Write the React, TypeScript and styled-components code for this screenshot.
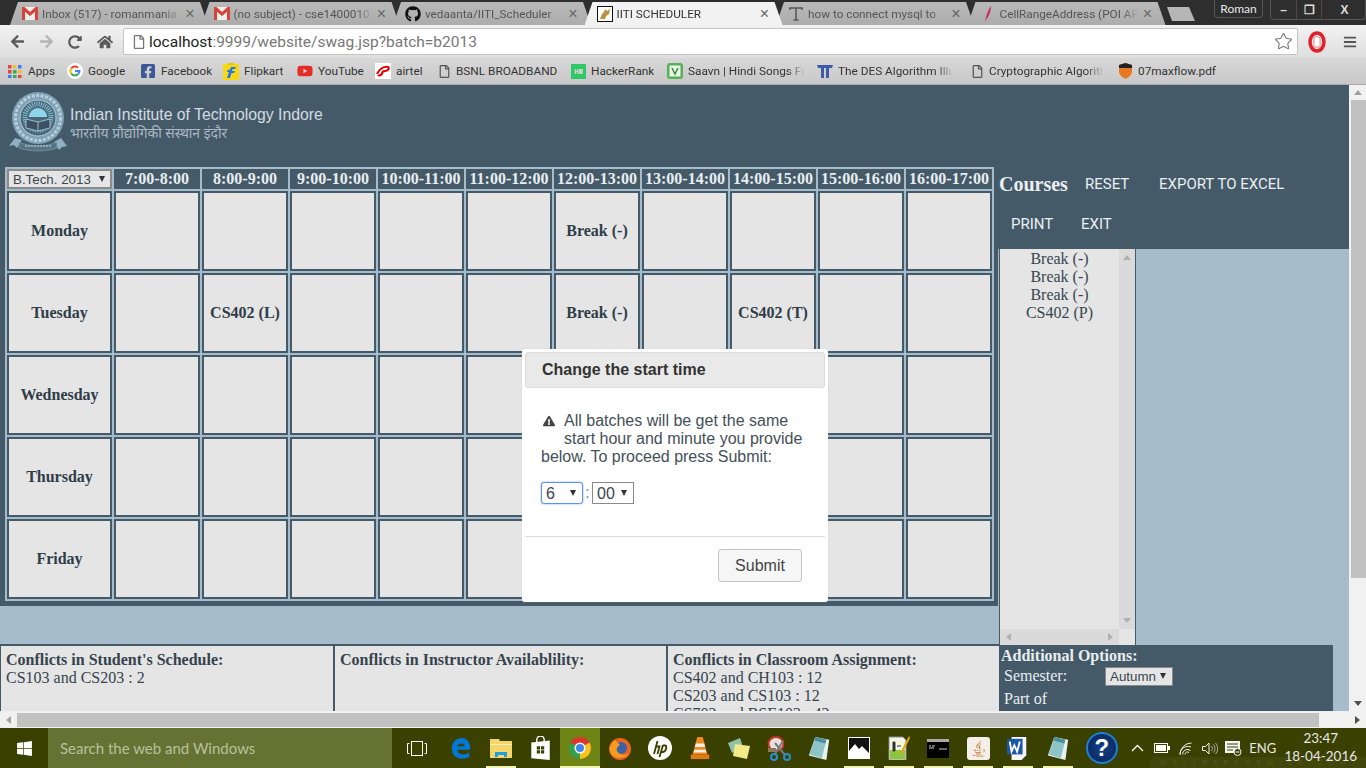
import React from 'react'
import styled, { createGlobalStyle } from 'styled-components'
import { FaGithub, FaFacebookSquare, FaYoutube, FaWindows, FaHome, FaArrowLeft, FaArrowRight, FaRedoAlt, FaRegFile, FaExclamationTriangle, FaJava, FaBars } from 'react-icons/fa'
import { SiHackerrank } from 'react-icons/si'
import { Star } from 'lucide-react'

const dark = '#455a68'
const blue = '#a6bccb'
const cellBg = '#e5e5e5'

const GlobalStyle = createGlobalStyle`
  html, body { margin: 0; padding: 0; overflow: hidden; }
  * { box-sizing: border-box; }
`

const Screen = styled.div`
  width: 1366px;
  height: 768px;
  display: flex;
  flex-direction: column;
  overflow: hidden;
  font-family: 'Liberation Sans', sans-serif;
`

/* browser chrome */
const TabStrip = styled.div`
  height: 25px;
  flex: none;
  display: flex;
  align-items: flex-end;
  padding-left: 10px;
  background: #2e2e2e;
`
const Tab = styled.div<{ $active?: boolean }>`
  width: 198px;
  height: 23px;
  margin-right: -6.5px;
  padding: 0 13px 0 12px;
  display: flex;
  align-items: center;
  gap: 4px;
  flex: none;
  clip-path: polygon(0 100%, 8px 0, 190px 0, 198px 100%);
  background: ${p => (p.$active ? '#f2f2f2' : 'linear-gradient(#b9b9b9, #acacac)')};
  color: ${p => (p.$active ? '#333' : '#555')};
  z-index: ${p => (p.$active ? 2 : 1)};
  font: 11.75px Roboto, sans-serif;
`
const TabLabel = styled.span`
  flex: 1;
  overflow: hidden;
  white-space: nowrap;
  -webkit-mask-image: linear-gradient(90deg, #000 88%, transparent);
  mask-image: linear-gradient(90deg, #000 88%, transparent);
`
const TabClose = styled.span`
  width: 10px;
  color: #666;
  font: 16px 'Liberation Sans', sans-serif;
  line-height: 10px;
  text-align: center;
`
const NewTab = styled.div`
  width: 28px;
  height: 14px;
  margin: 0 0 4px 8px;
  background: #b5b5b5;
  clip-path: polygon(0 0, 22px 0, 28px 100%, 5px 100%);
  flex: none;
`
const StripRight = styled.div`
  margin-left: auto;
  align-self: flex-start;
  display: flex;
`
const Profile = styled.div`
  width: 49px;
  height: 18px;
  margin-right: 7px;
  border: 1px solid #555;
  border-top: none;
  border-radius: 0 0 4px 4px;
  color: #e8e8e8;
  font: 12px/17px Lato, sans-serif;
  text-align: center;
`
const WindowButtons = styled.div`
  width: 96px;
  height: 20px;
  display: grid;
  grid-template-columns: 25px 25px 46px;
  border: 1px solid #555;
  border-top: none;
  border-radius: 0 0 4px 4px;
  color: #ddd;
  font: bold 12px 'Liberation Sans', sans-serif;
`
const WindowButton = styled.div`
  display: flex;
  align-items: center;
  justify-content: center;
  border-left: 1px solid #4a4a4a;
  &:first-child { border-left: none; }
`
const Toolbar = styled.div`
  height: 33px;
  flex: none;
  display: flex;
  align-items: center;
  background: linear-gradient(#f2f2f2, #dedede);
  padding-left: 10px;
  color: #555;
`
const NavButton = styled.div<{ $faded?: boolean }>`
  width: 29px;
  display: flex;
  color: ${p => (p.$faded ? '#b5b5b5' : '#5a5a5a')};
`
const AddressBar = styled.div`
  width: 1175px;
  height: 27px;
  margin-left: -3px;
  display: flex;
  align-items: center;
  gap: 3px;
  padding: 0 4px 0 8px;
  background: #fff;
  border: 1px solid #c4c4c4;
  border-radius: 2px;
  font: 15.5px Roboto, sans-serif;
  color: #777;
`
const Host = styled.span`
  color: #222;
`
const UrlText = styled.span`
  flex: 1;
  white-space: nowrap;
`
const ToolbarEnd = styled.div`
  display: flex;
  align-items: center;
  gap: 17px;
  margin-left: 10px;
`
const BookmarkBar = styled.div`
  height: 27px;
  flex: none;
  display: flex;
  align-items: center;
  padding-left: 8px;
  background: linear-gradient(#d8d8d8, #c8c8c8);
  border-bottom: 1px solid #aaa;
`
const Bookmark = styled.div<{ $w: number; $label: number; $fade?: boolean }>`
  width: ${p => p.$w}px;
  flex: none;
  display: flex;
  align-items: center;
  gap: 5px;
  font: 11.8px Roboto, sans-serif;
  color: #333;
  span {
    max-width: ${p => p.$label}px;
    overflow: hidden;
    white-space: nowrap;
    ${p => (p.$fade ? 'mask-image: linear-gradient(90deg, #000 85%, transparent);' : '')}
  }
`

/* page */
const PageRow = styled.div`
  height: 626px;
  flex: none;
  display: flex;
`
const Viewport = styled.div`
  width: 1349px;
  flex: none;
  position: relative;
  overflow: hidden;
  background: ${blue};
`
const Masthead = styled.div`
  height: 82px;
  display: flex;
  align-items: flex-start;
  padding: 7px 0 0 7px;
  gap: 3px;
  background: ${dark};
`
const Brand = styled.div`
  padding-top: 14px;
`
const BrandName = styled.div`
  font: 15.75px/18px 'Liberation Sans', sans-serif;
  color: #d3dce2;
`
const BrandHindi = styled.div`
  font: 13.9px/17px 'Noto Sans', 'Liberation Sans', sans-serif;
  color: #a9b8c3;
`
const MainRow = styled.div`
  height: 478px;
  display: flex;
  align-items: flex-start;
`
const TableWrap = styled.div`
  width: 998px;
  flex: none;
  padding: 0 4px 5px 5px;
  background: ${dark};
`
const Timetable = styled.div`
  display: grid;
  grid-template-columns: 105px repeat(10, 86px);
  grid-template-rows: 20px repeat(5, 80px);
  gap: 2px;
  padding: 2px;
  background: ${blue};
`
const HeadCell = styled.div`
  display: flex;
  align-items: center;
  justify-content: center;
  background: ${dark};
  font: bold 16px 'Liberation Serif', serif;
  color: #e9eef1;
  white-space: nowrap;
`
const Cell = styled.div`
  display: flex;
  align-items: center;
  justify-content: center;
  background: ${cellBg};
  border: 2px solid ${dark};
  font: bold 16px 'Liberation Serif', serif;
  color: #2f3d49;
`
const SelectWrap = styled.div<{ $w: number; $h: number }>`
  position: relative;
  width: ${p => p.$w}px;
  height: ${p => p.$h}px;
  &::after {
    content: '';
    position: absolute;
    right: 7px;
    top: 50%;
    margin-top: -3px;
    border-left: 3.5px solid transparent;
    border-right: 3.5px solid transparent;
    border-top: 6px solid #333;
    pointer-events: none;
  }
`
const NativeSelect = styled.select<{ $focus?: boolean; $size: number; $bg?: string; $thick?: boolean }>`
  appearance: none;
  width: 100%;
  height: 100%;
  padding: 0 0 0 4px;
  margin: 0;
  border: ${p => (p.$focus ? '1px solid #5b93e5' : `${p.$thick ? 2 : 1}px solid #8a8a8a`)};
  border-radius: ${p => (p.$focus ? 3 : 0)}px;
  box-shadow: ${p => (p.$focus ? '0 0 2px #7aa7ec' : 'none')};
  background: ${p => p.$bg || '#fff'};
  color: #3a4650;
  font: ${p => p.$size}px 'Liberation Sans', sans-serif;
  outline: none;
`
const SideColumn = styled.div`
  flex: 1;
  align-self: stretch;
  display: flex;
  flex-direction: column;
`
const CourseBar = styled.div`
  height: 82px;
  flex: none;
  padding-left: 1px;
  background: ${dark};
  color: #e9eef1;
`
const CourseRow = styled.div<{ $first?: boolean }>`
  height: ${p => (p.$first ? 34 : 40)}px;
  margin-top: ${p => (p.$first ? 0 : 3)}px;
  display: flex;
  align-items: center;
`
const CourseTitle = styled.div`
  font: bold 20px 'Liberation Serif', serif;
  width: 86px;
`
const CourseAction = styled.div<{ $w: number; $indent?: number }>`
  width: ${p => p.$w}px;
  padding-left: ${p => p.$indent || 0}px;
  font: 15px Roboto, sans-serif;
  color: #eaeff2;
`
const CourseListBox = styled.div`
  flex: 1;
  width: 137px;
  margin-left: 1px;
  display: grid;
  grid-template-columns: 1fr 16px;
  grid-template-rows: 1fr 16px;
  background: ${cellBg};
  border-left: 1px solid ${dark};
  border-right: 1px solid ${dark};
`
const CourseItems = styled.div`
  padding-top: 1px;
  font: 16px/18px 'Liberation Serif', serif;
  color: #38454f;
  text-align: center;
`
const ListScrollV = styled.div`
  background: #dadada;
  display: flex;
  flex-direction: column;
  justify-content: space-between;
  align-items: center;
  padding: 6px 0;
`
const ListScrollH = styled.div`
  background: #dadada;
  display: flex;
  justify-content: space-between;
  align-items: center;
  padding: 0 6px;
`
const Arrow = styled.i<{ $dir: 'up' | 'down' | 'left' | 'right'; $c?: string }>`
  display: block;
  width: 0;
  height: 0;
  border: 4px solid transparent;
  ${p => (p.$dir === 'up' ? `border-bottom: 5px solid ${p.$c || '#b0b0b0'}; border-top: none;` : '')}
  ${p => (p.$dir === 'down' ? `border-top: 5px solid ${p.$c || '#b0b0b0'}; border-bottom: none;` : '')}
  ${p => (p.$dir === 'left' ? `border-right: 5px solid ${p.$c || '#b0b0b0'}; border-left: none;` : '')}
  ${p => (p.$dir === 'right' ? `border-left: 5px solid ${p.$c || '#b0b0b0'}; border-right: none;` : '')}
`
const BottomRow = styled.div`
  display: flex;
  height: 66px;
`
const ConflictPanel = styled.div`
  width: 333px;
  flex: none;
  padding: 5px;
  background: ${cellBg};
  border-top: 2px solid ${dark};
  border-left: 1px solid ${dark};
  margin-top: -1px;
  font: 16px/18px 'Liberation Serif', serif;
  color: #36434d;
  & + & { border-left-width: 2px; }
`
const ConflictTitle = styled.div`
  font-weight: bold;
`
const OptionsPanel = styled.div`
  width: 334px;
  flex: none;
  padding-left: 2px;
  background: ${dark};
  color: #e9eef1;
  font: 16px/18px 'Liberation Serif', serif;
`
const OptionsTitle = styled.div`
  font-weight: bold;
  padding-top: 2px;
`
const OptionRow = styled.div`
  display: flex;
  align-items: center;
  height: 22px;
  padding-left: 3px;
  margin-bottom: 1px;
`
const OptionLabel = styled.div`
  width: 101px;
`
const PageScrollV = styled.div`
  width: 17px;
  flex: none;
  background: #f1f1f1;
  display: flex;
  flex-direction: column;
  align-items: center;
`
const ScrollCap = styled.div`
  height: 15px;
  width: 100%;
  display: flex;
  align-items: center;
  justify-content: center;
  flex: none;
`
const ThumbV = styled.div`
  width: 15px;
  height: 478px;
  margin-left: 2px;
  background: #c1c1c1;
`
const ScrollSpacer = styled.div`
  flex: 1;
`
const PageScrollH = styled.div`
  height: 17px;
  flex: none;
  display: flex;
  align-items: center;
  background: #f1f1f1;
`
const ThumbH = styled.div`
  width: 1302px;
  height: 14px;
  background: #c1c1c1;
`
const HCap = styled.div`
  width: 17px;
  flex: none;
  display: flex;
  justify-content: center;
`

/* dialog */
const Dialog = styled.div`
  position: absolute;
  left: 522px;
  top: 264px;
  width: 306px;
  height: 253px;
  padding: 3px;
  background: #fff;
  border-radius: 3px;
  box-shadow: 0 0 1px #bbb;
  color: #454f58;
  font: 16px/18px 'Liberation Sans', sans-serif;
`
const DialogTitle = styled.div`
  height: 36px;
  padding-left: 16px;
  background: #e9e9e9;
  border: 1px solid #dddddd;
  border-radius: 3px;
  font: bold 16px/34px 'Liberation Sans', sans-serif;
  color: #333;
`
const DialogBody = styled.div`
  height: 148px;
  padding: 24px 16px 0;
`
const WarnIcon = styled.span`
  float: left;
  width: 23px;
  height: 36px;
  padding: 2px 0 0 2px;
  color: #444;
  font-size: 12px;
`
const Message = styled.p`
  margin: 0;
`
const TimeRow = styled.div`
  display: flex;
  align-items: center;
  margin-top: 16px;
`
const Colon = styled.span`
  width: 9px;
  text-align: center;
  color: #888;
`
const DialogFooter = styled.div`
  border-top: 1px solid #ddd;
  height: 64px;
  padding: 12px 23px 0 0;
  display: flex;
  justify-content: flex-end;
  align-items: flex-start;
`
const SubmitButton = styled.button`
  width: 84px;
  height: 33px;
  background: #f6f6f6;
  border: 1px solid #c5c5c5;
  border-radius: 3px;
  color: #454545;
  font: 16px 'Liberation Sans', sans-serif;
`

/* taskbar */
const Taskbar = styled.div`
  height: 40px;
  flex: none;
  display: flex;
  align-items: stretch;
  background: #3a4000;
  color: #fff;
  position: relative;
`
const StartButton = styled.div`
  width: 48px;
  flex: none;
  display: flex;
  align-items: center;
  justify-content: center;
`
const SearchBox = styled.div`
  width: 344px;
  flex: none;
  display: flex;
  align-items: center;
  padding-left: 12px;
  background: #667233;
  color: #b9c09c;
  font: 15px Lato, sans-serif;
`
const TaskView = styled.div`
  width: 49px;
  flex: none;
  display: flex;
  align-items: center;
  justify-content: center;
`
const TaskSlot = styled.div<{ $active?: boolean; $running?: boolean }>`
  width: 39.8px;
  flex: none;
  display: flex;
  align-items: center;
  justify-content: center;
  position: relative;
  background: ${p => (p.$active ? '#6e8515' : 'transparent')};
  &::after {
    content: '';
    display: ${p => (p.$running ? 'block' : 'none')};
    position: absolute;
    left: ${p => (p.$active ? 0 : 5)}px;
    right: ${p => (p.$active ? 0 : 5)}px;
    bottom: 0;
    height: 2px;
    background: #f1f3b5;
  }
`
const HelpBadge = styled.div`
  width: 32px;
  height: 32px;
  border-radius: 50%;
  margin: auto 8px;
  flex: none;
  display: flex;
  align-items: center;
  justify-content: center;
  background: radial-gradient(#123f8a, #0a2553);
  border: 2px solid #1f7fd6;
  color: #fff;
  font: bold 24px 'Liberation Sans', sans-serif;
`
const TrayItem = styled.div<{ $w?: number }>`
  width: ${p => p.$w || 24}px;
  flex: none;
  display: flex;
  align-items: center;
  justify-content: center;
  font: 13px Lato, sans-serif;
  color: #e8e8e8;
`
const Clock = styled.div`
  width: 82px;
  flex: none;
  padding-top: 1px;
  text-align: center;
  font: 13.5px/18px Lato, sans-serif;
  color: #e8e8e8;
  z-index: 1;
`
const Watermark = styled.div`
  position: absolute;
  left: 1150px;
  right: 0;
  bottom: 0;
  height: 11px;
  padding-left: 10px;
  border-radius: 4px 0 0 0;
  background: rgba(255, 255, 255, 0.04);
  color: rgba(255, 255, 255, 0.1);
  font: 7px/11px 'Liberation Sans', sans-serif;
  letter-spacing: 6px;
  white-space: nowrap;
  overflow: hidden;
`

/* small drawings */
const GmailIcon = () => (
  <svg width="16" height="13" viewBox="0 0 16 13">
    <rect width="16" height="13" fill="#eee" />
    <path d="M0 0h2.500L8 5l5.500-5H16v13h-3V4.800L8 9 3 4.800V13H0z" fill="#d8433a" />
  </svg>
)
const TomcatIcon = () => (
  <svg width="16" height="16" viewBox="0 0 16 16">
    <rect x=".5" y=".5" width="15" height="15" fill="#fff" stroke="#111" />
    <path d="M3 13l2-5 2-2 1-3 2 2 3-2-1 5-3 2-1 3z" fill="#b9913f" />
  </svg>
)
const SerifT = () => (
  <svg width="16" height="16" viewBox="0 0 16 16">
    <path d="M2 4V2h12v2M8 2v12M5.500 14h5" fill="none" stroke="#555" strokeWidth="1.500" />
  </svg>
)
const Feather = () => (
  <svg width="16" height="16" viewBox="0 0 16 16">
    <path d="M5 16C6 10 8 4 11 0c0 5-2 10-4.500 13z" fill="#c8255d" />
    <path d="M5 16l1-3 1 0z" fill="#e8a03c" />
  </svg>
)
const AppsGrid = () => (
  <svg width="15" height="13" viewBox="0 0 15 13">
    {['#e8453c', '#f9bb2d', '#3b7ded', '#e8453c', '#3bab5a', '#f9bb2d', '#3b7ded', '#3bab5a', '#e8453c'].map((c, i) => (
      <rect key={i} x={(i % 3) * 5} y={Math.floor(i / 3) * 5} width="3.500" height="3.500" fill={c} />
    ))}
  </svg>
)
const GoogleG = () => (
  <svg width="16" height="16" viewBox="0 0 16 16">
    <circle cx="8" cy="8" r="8" fill="#fff" />
    <path d="M4.200 5.500A4.500 4.500 0 0 1 11 4.700" fill="none" stroke="#ea4335" strokeWidth="2" />
    <path d="M4.200 5.500a4.500 4.500 0 0 0 0 5" fill="none" stroke="#fbbc05" strokeWidth="2" />
    <path d="M4.200 10.500A4.500 4.500 0 0 0 11.200 11" fill="none" stroke="#34a853" strokeWidth="2" />
    <path d="M8 8h4.500a4.500 4.500 0 0 1-1.300 3" fill="none" stroke="#4285f4" strokeWidth="2" />
  </svg>
)
const FlipkartIcon = () => (
  <svg width="16" height="18" viewBox="0 0 16 18">
    <rect y="2" width="16" height="16" fill="#f8d80e" />
    <path d="M5 1h6v2H5z" fill="#e8c400" />
    <path d="M8 5h5l-1 2H9.500L9 9h3l-1 2H8.500L7 16H4l2-6H4l.5-2h2z" fill="#2874f0" />
  </svg>
)
const AirtelIcon = () => (
  <svg width="16" height="16" viewBox="0 0 16 16">
    <rect width="16" height="16" fill="#fff" />
    <path d="M2 11c2-5 7-8 11-7 2 1 0 4-3 4-2 0-3 1-3 3-1 1-3 2-4 1" fill="none" stroke="#e40000" strokeWidth="2" />
  </svg>
)
const SaavnIcon = () => (
  <svg width="16" height="16" viewBox="0 0 16 16">
    <rect width="16" height="16" rx="3" fill="#55b058" />
    <rect x="2.500" y="2.500" width="11" height="11" fill="#eaf5e6" />
    <path d="M5 5l3 6 3-6" fill="none" stroke="#3a8a3f" strokeWidth="1.500" />
  </svg>
)
const DesIcon = () => (
  <svg width="16" height="14" viewBox="0 0 16 14">
    <path d="M0 1h16l-1 3h-3v10H9V4H7v10H4V4H1z" fill="#3f5aa8" />
  </svg>
)
const PrincetonIcon = () => (
  <svg width="15" height="16" viewBox="0 0 15 16">
    <path d="M1 2l6.500-2L14 2v6c0 4-3 6-6.500 8C4 14 1 12 1 8z" fill="#e87722" />
    <path d="M1 2l6.500-2L14 2v3H1z" fill="#222" />
  </svg>
)
const OperaIcon = () => (
  <svg width="18" height="22" viewBox="0 0 18 22">
    <ellipse cx="9" cy="11" rx="7" ry="9" fill="none" stroke="#e0202a" strokeWidth="3.500" />
    <path d="M6 16V7l1.500-1L9 5l1.500 1L12 7v9z" fill="#fff" stroke="#e0202a" strokeWidth=".5" />
  </svg>
)
const IitiLogo = () => (
  <svg width="60" height="62" viewBox="0 0 60 62">
    <path d="M8 46l-6 8 5-1 3 3 5-8zM54 46l6 8-5 1-3 3-5-8z" fill="#8fb0c2" />
    <circle cx="31" cy="26" r="26" fill="#7fa2b6" />
    <circle cx="31" cy="26" r="22.500" fill="none" stroke="#b9d0dc" strokeWidth="3" strokeDasharray="3 1.500" />
    <circle cx="31" cy="26" r="18" fill="#4c6778" stroke="#b4ccd9" />
    <circle cx="31" cy="25" r="13" fill="none" stroke="#7fc0d8" strokeWidth="5" strokeDasharray="1 1.200" />
    <path d="M22 25a9 9 0 0 1 18 0z" fill="#8fd6ea" />
    <path d="M19 27l12 3 12-3v9l-12 3-12-3z" fill="#3b5262" stroke="#9cbccd" />
    <path d="M31 30v9" stroke="#9cbccd" />
    <path d="M12 50c10 5 28 5 38 0v6c-10 4-28 4-38 0z" fill="#577486" stroke="#8fb0c2" strokeWidth=".5" />
    <path d="M18 54h26" stroke="#c7d8e1" strokeDasharray="2 1" />
  </svg>
)
const TaskViewIcon = () => (
  <svg width="20" height="15" viewBox="0 0 20 15" fill="none" stroke="#fff">
    <rect x="4.500" y=".5" width="11" height="14" />
    <path d="M2.500 2.500H.5v10h2M17.500 2.500h2v10h-2" />
  </svg>
)
const EdgeIcon = () => (
  <svg width="20" height="22" viewBox="0 0 22 24">
    <path d="M1 13C1 5 6 1 12 1c6 0 9 5 9 10v3H7c0 5 7 7 13 3v5c-8 4-19 1-19-9zM7 10h8c0-4-7-4-8 0z" fill="#0078d7" />
  </svg>
)
const FolderIcon = () => (
  <svg width="22" height="20" viewBox="0 0 22 20">
    <path d="M0 1h9l1 2h12v17H0z" fill="#f5d66b" />
    <path d="M0 6h22v1H0z" fill="#fdf0b0" />
    <path d="M5 19v-5h12v5h-3v-2H8v2z" fill="#1b9fe0" />
  </svg>
)
const StoreIcon = () => (
  <svg width="21" height="24" viewBox="0 0 22 26">
    <path d="M7 7V4a4 4 0 0 1 8 0v3" fill="none" stroke="#fff" strokeWidth="1.500" />
    <path d="M1 7l20-2v21l-20-2z" fill="#fff" />
    <path d="M7 11h3.500v3.500H7zM11.500 11H15v3.500h-3.500zM7 15.500h3.500V19H7zM11.500 15.500H15V19h-3.500z" fill="#3a4000" />
  </svg>
)
const ChromeIcon = () => (
  <svg width="22" height="22" viewBox="0 0 22 22">
    <circle cx="11" cy="11" r="11" fill="#e0352b" />
    <path d="M11 11L1.500 5.500A11 11 0 0 0 11 22z" fill="#2fa44f" />
    <path d="M11 11V22A11 11 0 0 0 20.500 5.500z" fill="#f7c51e" />
    <circle cx="11" cy="11" r="5.500" fill="#fff" />
    <circle cx="11" cy="11" r="4" fill="#3f86e8" />
  </svg>
)
const FirefoxIcon = () => (
  <svg width="22" height="23" viewBox="0 0 22 23">
    <circle cx="11" cy="12" r="11" fill="#e8641f" />
    <circle cx="12" cy="11" r="6" fill="#3a62a8" />
    <path d="M1 14c2 8 14 10 19 2-4 3-10 2-12-2-1-3 1-5 3-6L6 3C2 6 0 10 1 14z" fill="#f49a1e" />
  </svg>
)
const HpIcon = () => (
  <svg width="24" height="24" viewBox="0 0 24 24">
    <circle cx="12" cy="12" r="12" fill="#fff" />
    <path d="M9.500 5L6 18M8 10.500h3.500l-2 7.500M15 9l-3.500 12M15 9.500h2.500c1.500 0 1 6-2.500 6.500h-2" fill="none" stroke="#3a4000" strokeWidth="1.800" />
  </svg>
)
const VlcIcon = () => (
  <svg width="20" height="24" viewBox="0 0 20 26">
    <path d="M7 1h6l5 19H2z" fill="#f08a1c" />
    <path d="M5.500 8h9l1 4h-11zM4 15h12l1 3H3z" fill="#f4f0e8" />
    <path d="M0 20h20v5H0z" fill="#e27a14" />
  </svg>
)
const StickyIcon = () => (
  <svg width="24" height="22" viewBox="0 0 24 22">
    <path d="M1 6l12-5 3 9-11 6z" fill="#8fc0a8" />
    <path d="M8 7l15 2-3 13-14-3z" fill="#f3ea88" />
  </svg>
)
const ScissorsIcon = () => (
  <svg width="24" height="26" viewBox="0 0 24 26">
    <ellipse cx="9" cy="9" rx="7.500" ry="7" fill="#e8e2dc" stroke="#c0392b" strokeWidth="2" />
    <path d="M8 8l10 12M16 6L8 19" stroke="#777" strokeWidth="2" />
    <circle cx="7" cy="22" r="3" fill="none" stroke="#2a8fd0" strokeWidth="2" />
    <circle cx="20" cy="22" r="3" fill="none" stroke="#2a8fd0" strokeWidth="2" />
    <rect x="1" y="13" width="8" height="4" fill="#8a7a5a" />
  </svg>
)
const NotepadIcon = () => (
  <svg width="22" height="24" viewBox="0 0 22 26">
    <path d="M7 1l15 3-3 22L0 21z" fill="#e8f1f2" />
    <path d="M7 1l12 3-5 20L1 20z" fill="#8cc4c8" />
    <path d="M7 1l12 3-1 4L6 5z" fill="#4a8f9a" />
  </svg>
)
const PhotosIcon = () => (
  <svg width="22" height="22" viewBox="0 0 22 22">
    <rect x=".5" y=".5" width="21" height="21" fill="#111" stroke="#fff" />
    <path d="M1 21v-7l6-7 4 5 3-3 7 7v5z" fill="#fff" />
  </svg>
)
const NppIcon = () => (
  <svg width="22" height="24" viewBox="0 0 22 24">
    <path d="M1 1h14l3 3v20H1z" fill="#f2f5e0" stroke="#888" />
    <path d="M2 14h15v9H2z" fill="#8cc63f" />
    <path d="M5 6v9h2V6zM9 10h4" fill="#333" stroke="#333" />
    <path d="M21 0l-8 15-2 4 4-3 7-14z" fill="#e8a51c" />
  </svg>
)
const CmdIcon = () => (
  <svg width="22" height="19" viewBox="0 0 22 19">
    <rect width="22" height="19" fill="#000" />
    <rect width="22" height="3" fill="#aaa" />
    <path d="M2 7h2M5 7h3M2 9h5M12 10h8" stroke="#ccc" />
  </svg>
)
const WordIcon = () => (
  <svg width="22" height="24" viewBox="0 0 24 26">
    <path d="M5 1h16v20l-5 5H5z" fill="#f4f6fb" />
    <path d="M0 3h17v17H0z" fill="#1d56a8" />
    <path d="M3 6l2 11 3-7 3 7 3-11" fill="none" stroke="#fff" strokeWidth="2" />
  </svg>
)
const JavaTile = styled.div`
  width: 23px;
  height: 23px;
  display: flex;
  align-items: center;
  justify-content: center;
  background: #f3efe8;
  border-radius: 3px;
  color: #c0662b;
  font-size: 17px;
`
const ChevronIcon = () => (
  <svg width="13" height="8" viewBox="0 0 13 8"><path d="M1 7l5.500-5.500L12 7" fill="none" stroke="#fff" strokeWidth="1.300" /></svg>
)
const BatteryIcon = () => (
  <svg width="16" height="10" viewBox="0 0 16 10">
    <rect x=".5" y=".5" width="13" height="9" fill="none" stroke="#fff" />
    <rect x="2" y="2" width="10" height="6" fill="#fff" />
    <rect x="14" y="3" width="2" height="4" fill="#fff" />
  </svg>
)
const WifiIcon = () => (
  <svg width="13" height="13" viewBox="0 0 13 13" fill="none" stroke="#f0f0f0">
    <path d="M1 12.500A11.500 11.500 0 0 1 12.500 1M1 12.500A8 8 0 0 1 12 5M3.500 12.500a5 5 0 0 1 8-4M6 12.500a2.500 2.500 0 0 1 4-2" />
  </svg>
)
const SpeakerIcon = () => (
  <svg width="16" height="13" viewBox="0 0 16 13" fill="none" stroke="#f0f0f0">
    <path d="M.5 4.500h3L7 1v11L3.500 8.500h-3z" />
    <path d="M9.500 4a4 4 0 0 1 0 5M11.500 2.500a6 6 0 0 1 0 8M13.500 1a8 8 0 0 1 0 11" stroke="#aaa" />
  </svg>
)
const NoticeIcon = () => (
  <svg width="17" height="15" viewBox="0 0 17 15">
    <rect width="15" height="12" fill="#f4f4f4" />
    <path d="M2 3h11M2 6h11M2 9h6" stroke="#3a4000" />
    <circle cx="12.500" cy="11" r="3.500" fill="#3a4000" stroke="#f4f4f4" />
    <path d="M10.500 11h4" stroke="#f4f4f4" />
  </svg>
)

const TABS = [
  { icon: <GmailIcon />, label: 'Inbox (517) - romanmania' },
  { icon: <GmailIcon />, label: '(no subject) - cse1400010' },
  { icon: <FaGithub size={16} color="#111" />, label: 'vedaanta/IITI_Scheduler' },
  { icon: <TomcatIcon />, label: 'IITI SCHEDULER', active: true },
  { icon: <SerifT />, label: 'how to connect mysql to' },
  { icon: <Feather />, label: 'CellRangeAddress (POI API' },
]

const BOOKMARKS = [
  { icon: <AppsGrid />, label: 'Apps', w: 59, max: 40 },
  { icon: <GoogleG />, label: 'Google', w: 73, max: 50 },
  { icon: <FaFacebookSquare size={16} color="#3b5998" />, label: 'Facebook', w: 83, max: 60 },
  { icon: <FlipkartIcon />, label: 'Flipkart', w: 74, max: 50 },
  { icon: <FaYoutube size={16} color="#e52d27" />, label: 'YouTube', w: 78, max: 60 },
  { icon: <AirtelIcon />, label: 'airtel', w: 63, max: 40 },
  { icon: <FaRegFile size={13} color="#555" />, label: 'BSNL BROADBAND', w: 133, max: 110 },
  { icon: <SiHackerrank size={15} color="#2ec866" />, label: 'HackerRank', w: 96, max: 70 },
  { icon: <SaavnIcon />, label: 'Saavn | Hindi Songs Free', w: 150, max: 117, fade: true },
  { icon: <DesIcon />, label: 'The DES Algorithm Illustrated', w: 154, max: 116, fade: true },
  { icon: <FaRegFile size={13} color="#555" />, label: 'Cryptographic Algorithms', w: 147, max: 115, fade: true },
  { icon: <PrincetonIcon />, label: '07maxflow.pdf', w: 110, max: 90 },
]

const TIMES = ['7:00-8:00', '8:00-9:00', '9:00-10:00', '10:00-11:00', '11:00-12:00', '12:00-13:00', '13:00-14:00', '14:00-15:00', '15:00-16:00', '16:00-17:00']
const DAYS = ['Monday', 'Tuesday', 'Wednesday', 'Thursday', 'Friday']

const slotText = (day: string, col: number) => {
  if ((day === 'Monday' || day === 'Tuesday') && col === 5) return 'Break (-)'
  if (day === 'Tuesday' && col === 1) return 'CS402 (L)'
  if (day === 'Tuesday' && col === 7) return 'CS402 (T)'
  return ''
}

const TASK_ICONS = [
  { icon: <EdgeIcon />, running: false },
  { icon: <FolderIcon />, running: true },
  { icon: <StoreIcon />, running: false },
  { icon: <ChromeIcon />, running: true, active: true },
  { icon: <FirefoxIcon />, running: false },
  { icon: <HpIcon />, running: false },
  { icon: <VlcIcon />, running: false },
  { icon: <StickyIcon />, running: false },
  { icon: <ScissorsIcon />, running: false },
  { icon: <NotepadIcon />, running: false },
  { icon: <PhotosIcon />, running: true },
  { icon: <NppIcon />, running: true },
  { icon: <CmdIcon />, running: true },
  { icon: <JavaTile><FaJava /></JavaTile>, running: true },
  { icon: <WordIcon />, running: true },
  { icon: <NotepadIcon />, running: true },
]

export default function App() {
  return (
    <Screen>
      <GlobalStyle />
      <TabStrip>
        {TABS.map(t => (
          <Tab key={t.label} $active={t.active}>
            {t.icon}
            <TabLabel>{t.label}</TabLabel>
            <TabClose>×</TabClose>
          </Tab>
        ))}
        <NewTab />
        <StripRight>
          <Profile>Roman</Profile>
          <WindowButtons>
            <WindowButton>–</WindowButton>
            <WindowButton>❐</WindowButton>
            <WindowButton>X</WindowButton>
          </WindowButtons>
        </StripRight>
      </TabStrip>

      <Toolbar>
        <NavButton><FaArrowLeft size={15} /></NavButton>
        <NavButton $faded><FaArrowRight size={15} /></NavButton>
        <NavButton><FaRedoAlt size={14} /></NavButton>
        <NavButton><FaHome size={16} /></NavButton>
        <AddressBar>
          <FaRegFile size={14} color="#777" />
          <UrlText><Host>localhost</Host>:9999/website/swag.jsp?batch=b2013</UrlText>
          <Star size={19} color="#777" strokeWidth={1.4} />
        </AddressBar>
        <ToolbarEnd>
          <OperaIcon />
          <FaBars size={14} color="#555" />
        </ToolbarEnd>
      </Toolbar>

      <BookmarkBar>
        {BOOKMARKS.map(b => (
          <Bookmark key={b.label} $w={b.w} $label={b.max} $fade={b.fade}>
            {b.icon}
            <span>{b.label}</span>
          </Bookmark>
        ))}
      </BookmarkBar>

      <PageRow>
        <Viewport>
          <Masthead>
            <IitiLogo />
            <Brand>
              <BrandName>Indian Institute of Technology Indore</BrandName>
              <BrandHindi>भारतीय प्रौद्योगिकी संस्थान इंदौर</BrandHindi>
            </Brand>
          </Masthead>

          <MainRow>
            <TableWrap>
              <Timetable>
                <SelectWrap $w={105} $h={20}>
                  <NativeSelect $size={13.33} $bg={cellBg} $thick defaultValue="b2013">
                    <option value="b2013">B.Tech. 2013</option>
                  </NativeSelect>
                </SelectWrap>
                {TIMES.map(t => <HeadCell key={t}>{t}</HeadCell>)}
                {DAYS.map(day => (
                  <React.Fragment key={day}>
                    <Cell>{day}</Cell>
                    {TIMES.map((t, col) => <Cell key={t}>{slotText(day, col)}</Cell>)}
                  </React.Fragment>
                ))}
              </Timetable>
            </TableWrap>

            <SideColumn>
              <CourseBar>
                <CourseRow $first>
                  <CourseTitle>Courses</CourseTitle>
                  <CourseAction $w={74}>RESET</CourseAction>
                  <CourseAction $w={140}>EXPORT TO EXCEL</CourseAction>
                </CourseRow>
                <CourseRow>
                  <CourseAction $w={82} $indent={12}>PRINT</CourseAction>
                  <CourseAction $w={50}>EXIT</CourseAction>
                </CourseRow>
              </CourseBar>
              <CourseListBox>
                <CourseItems>
                  <div>Break (-)</div>
                  <div>Break (-)</div>
                  <div>Break (-)</div>
                  <div>CS402 (P)</div>
                </CourseItems>
                <ListScrollV>
                  <Arrow $dir="up" />
                  <Arrow $dir="down" />
                </ListScrollV>
                <ListScrollH>
                  <Arrow $dir="left" />
                  <Arrow $dir="right" />
                </ListScrollH>
              </CourseListBox>
            </SideColumn>
          </MainRow>

          <BottomRow>
            <ConflictPanel>
              <ConflictTitle>Conflicts in Student's Schedule:</ConflictTitle>
              CS103 and CS203 : 2
            </ConflictPanel>
            <ConflictPanel>
              <ConflictTitle>Conflicts in Instructor Availablility:</ConflictTitle>
            </ConflictPanel>
            <ConflictPanel>
              <ConflictTitle>Conflicts in Classroom Assignment:</ConflictTitle>
              CS402 and CH103 : 12<br />
              CS203 and CS103 : 12<br />
              CS702 and BSE102 : 42
            </ConflictPanel>
            <OptionsPanel>
              <OptionsTitle>Additional Options:</OptionsTitle>
              <OptionRow>
                <OptionLabel>Semester:</OptionLabel>
                <SelectWrap $w={68} $h={19}>
                  <NativeSelect $size={13.33} $bg={cellBg} defaultValue="autumn">
                    <option value="autumn">Autumn</option>
                  </NativeSelect>
                </SelectWrap>
              </OptionRow>
              <OptionRow>Part of</OptionRow>
            </OptionsPanel>
          </BottomRow>

          <Dialog>
            <DialogTitle>Change the start time</DialogTitle>
            <DialogBody>
              <WarnIcon><FaExclamationTriangle /></WarnIcon>
              <Message>All batches will be get the same start hour and minute you provide below. To proceed press Submit:</Message>
              <TimeRow>
                <SelectWrap $w={42} $h={22}>
                  <NativeSelect $focus $size={16} defaultValue="6">
                    <option value="6">6</option>
                  </NativeSelect>
                </SelectWrap>
                <Colon>:</Colon>
                <SelectWrap $w={42} $h={22}>
                  <NativeSelect $size={16} defaultValue="00">
                    <option value="00">00</option>
                  </NativeSelect>
                </SelectWrap>
              </TimeRow>
            </DialogBody>
            <DialogFooter>
              <SubmitButton>Submit</SubmitButton>
            </DialogFooter>
          </Dialog>
        </Viewport>
        <PageScrollV>
          <ScrollCap><Arrow $dir="up" $c="#a0a0a0" /></ScrollCap>
          <ThumbV />
          <ScrollSpacer />
          <ScrollCap><Arrow $dir="down" $c="#505050" /></ScrollCap>
        </PageScrollV>
      </PageRow>

      <PageScrollH>
        <HCap><Arrow $dir="left" $c="#a0a0a0" /></HCap>
        <ThumbH />
        <ScrollSpacer />
        <HCap><Arrow $dir="right" $c="#505050" /></HCap>
      </PageScrollH>

      <Taskbar>
        <StartButton><FaWindows size={17} /></StartButton>
        <SearchBox>Search the web and Windows</SearchBox>
        <TaskView><TaskViewIcon /></TaskView>
        {TASK_ICONS.map((t, i) => (
          <TaskSlot key={i} $active={t.active} $running={t.running}>{t.icon}</TaskSlot>
        ))}
        <HelpBadge>?</HelpBadge>
        <TrayItem><ChevronIcon /></TrayItem>
        <TrayItem><BatteryIcon /></TrayItem>
        <TrayItem><WifiIcon /></TrayItem>
        <TrayItem><SpeakerIcon /></TrayItem>
        <TrayItem><NoticeIcon /></TrayItem>
        <TrayItem $w={34}>ENG</TrayItem>
        <Clock>23:47<br />18-04-2016</Clock>
        <Watermark>WALLPAPERSWIDE.COM</Watermark>
      </Taskbar>
    </Screen>
  )
}
